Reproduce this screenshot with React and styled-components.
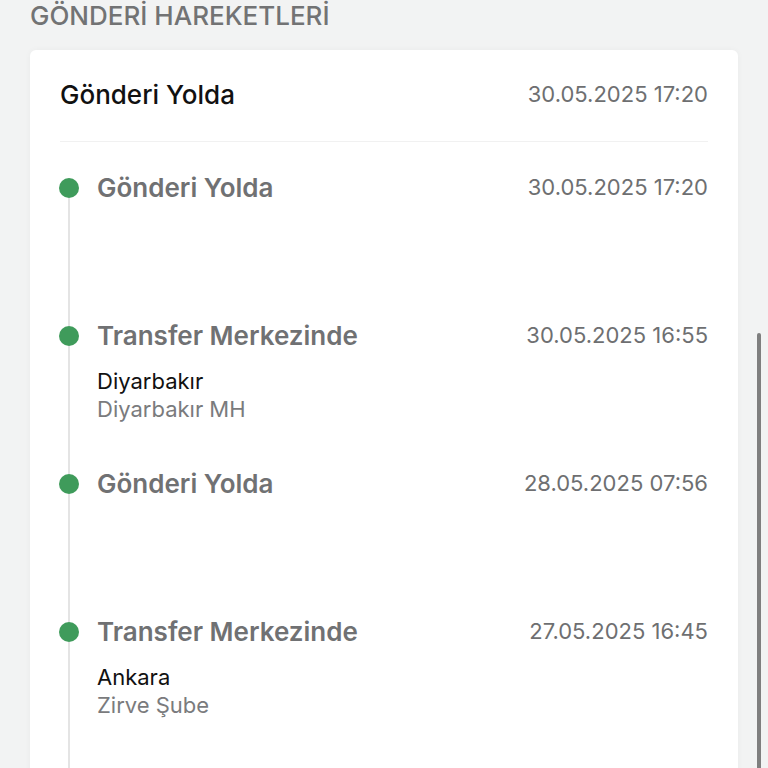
import React from 'react'
import styled, { createGlobalStyle } from 'styled-components'

const GlobalStyle = createGlobalStyle`
  html, body {
    margin: 0;
    padding: 0;
    background: #f2f3f3;
    font-family: Inter, "Noto Sans", "Liberation Sans", sans-serif;
    overflow: hidden;
  }
`

const Page = styled.main`
  display: flex;
  flex-direction: column;
  height: 768px;
  overflow: hidden;
  & > * {
    flex-shrink: 0;
  }
`

const SectionTitle = styled.h2`
  margin: 0;
  padding: 0 30px;
  height: 50px;
  font-size: 26px;
  line-height: 32px;
  font-weight: 500;
  color: #727374;
`

const Card = styled.section`
  margin: 0 30px;
  background: #ffffff;
  border-radius: 6px;
  box-shadow: 0 0 6px rgba(0, 0, 0, 0.04);
  padding: 29px 30px 0;
`

const HeaderRow = styled.div`
  display: flex;
  justify-content: space-between;
  align-items: center;
  height: 30px;
  padding-bottom: 32px;
  border-bottom: 1px solid #f1f1f1;
`

const HeaderTitle = styled.div`
  font-size: 26px;
  font-weight: 500;
  color: #111111;
`

const DateText = styled.div`
  font-size: 22px;
  line-height: 30px;
  color: #6e6f71;
  white-space: nowrap;
`

const Timeline = styled.ol`
  list-style: none;
  margin: 0;
  padding: 30px 0 0;
`

const Item = styled.li`
  display: flex;
  min-height: 148px;
`

const Rail = styled.div`
  display: flex;
  flex-direction: column;
  align-items: center;
  width: 20px;
  margin-left: -1px;
  margin-right: 18px;
`

const Stub = styled.span`
  height: 6px;
  width: 2px;
  flex-shrink: 0;
  background: ${p => (p.$hidden ? 'transparent' : '#e4e4e4')};
`

const Dot = styled.span`
  width: 20px;
  height: 20px;
  border-radius: 50%;
  background: #3f9b5b;
  flex-shrink: 0;
`

const Line = styled.span`
  flex: 1;
  width: 2px;
  background: #e4e4e4;
`

const Body = styled.div`
  flex: 1;
  display: flex;
  flex-direction: column;
`

const TitleRow = styled.div`
  display: flex;
  justify-content: space-between;
  align-items: center;
  height: 30px;
`

const ItemTitle = styled.div`
  font-size: 26px;
  font-weight: 600;
  color: #707173;
`

const Location = styled.div`
  margin-top: 17px;
  display: flex;
  flex-direction: column;
  font-size: 22px;
  line-height: 28px;
`

const City = styled.span`
  color: #111111;
`

const Branch = styled.span`
  color: #7a7b7d;
`

const ScrollThumb = styled.div`
  position: fixed;
  right: 7px;
  top: 333px;
  bottom: -20px;
  width: 4px;
  border-radius: 2px;
  background: #7f7f7f;
`

const events = [
  { title: 'Gönderi Yolda', date: '30.05.2025 17:20' },
  { title: 'Transfer Merkezinde', date: '30.05.2025 16:55', city: 'Diyarbakır', branch: 'Diyarbakır MH' },
  { title: 'Gönderi Yolda', date: '28.05.2025 07:56' },
  { title: 'Transfer Merkezinde', date: '27.05.2025 16:45', city: 'Ankara', branch: 'Zirve Şube' },
  { title: 'Gönderi Yolda', date: '27.05.2025 10:12' },
]

export default function App() {
  return (
    <>
      <GlobalStyle />
      <Page>
        <SectionTitle>GÖNDERİ HAREKETLERİ</SectionTitle>
        <Card>
          <HeaderRow>
            <HeaderTitle>Gönderi Yolda</HeaderTitle>
            <DateText>30.05.2025 17:20</DateText>
          </HeaderRow>
          <Timeline>
            {events.map((e, i) => (
              <Item key={i}>
                <Rail>
                  <Stub $hidden={i === 0} />
                  <Dot />
                  <Line />
                </Rail>
                <Body>
                  <TitleRow>
                    <ItemTitle>{e.title}</ItemTitle>
                    <DateText>{e.date}</DateText>
                  </TitleRow>
                  {e.city && (
                    <Location>
                      <City>{e.city}</City>
                      <Branch>{e.branch}</Branch>
                    </Location>
                  )}
                </Body>
              </Item>
            ))}
          </Timeline>
        </Card>
        <ScrollThumb />
      </Page>
    </>
  )
}
